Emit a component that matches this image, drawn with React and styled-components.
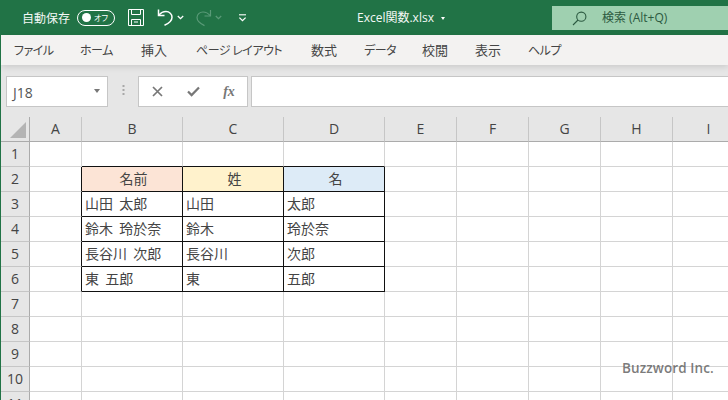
import React from "react";
import styled, { createGlobalStyle } from "styled-components";

const CJK = `"Noto Sans CJK JP", "Noto Sans", sans-serif`;
const UI = `"Open Sans", "Noto Sans CJK JP", sans-serif`;

const Global = createGlobalStyle`
  html, body { margin: 0; padding: 0; background: #fff; }
  body { width: 728px; height: 400px; overflow: hidden; font-family: ${UI}; }
  * { box-sizing: border-box; }
`;

const Page = styled.div`
  position: relative;
  width: 728px;
  height: 400px;
  overflow: hidden;
  border-left: 1px solid #217346;
  display: flex;
  flex-direction: column;
`;

const TitleBar = styled.header`
  height: 35px;
  margin-left: -1px;
  background: #217346;
  color: #fff;
  display: grid;
  grid-template-columns: 552px 176px;
  flex: none;
`;
const QuickAccess = styled.div`
  display: flex;
  align-items: center;
  padding-left: 22px;
  position: relative;
`;
const AutoSave = styled.span`
  font: 12px/16px ${CJK};
  width: 55px;
  flex: none;
  color: #f4f8f6;
`;
const Toggle = styled.span`
  width: 38px;
  height: 16px;
  flex: none;
  border: 1.2px solid #fff;
  border-radius: 8px;
  display: flex;
  align-items: center;
  padding: 0 0 0 4px;
  gap: 3px;
  margin-right: 13px;
  font: 8px/12px ${CJK};
  font-feature-settings: "palt";
  white-space: nowrap;
`;
const Knob = styled.i`
  width: 9px;
  height: 9px;
  flex: none;
  border-radius: 50%;
  background: #fff;
`;
const IconSlot = styled.span`
  display: inline-flex;
  width: ${(p) => p.$w}px;
  flex: none;
  justify-content: flex-start;
  align-items: center;
  height: 35px;
`;
const FileName = styled.div`
  position: absolute;
  left: 357px;
  top: 9px;
  font: 12px/17px ${UI};
  color: #f4f8f6;
  display: flex;
  align-items: center;
  white-space: nowrap;
`;
const FileCaret = styled.i`
  width: 0;
  height: 0;
  margin-left: 7px;
  margin-top: 2px;
  border: 2.5px solid transparent;
  border-top: 3px solid #fff;
  border-bottom: none;
`;
const SearchBox = styled.div`
  height: 24px;
  margin-top: 6px;
  background: #9fd0b0;
  color: #2c5a41;
  display: flex;
  align-items: center;
  padding-left: 20px;
  font: 12px/16px ${UI};
  gap: 15px;
`;

const Menu = styled.nav`
  height: 30px;
  flex: none;
  background: #f3f2f1;
  display: flex;
  align-items: center;
  padding-left: 13px;
  font: 13px/16px ${CJK};
  font-feature-settings: "palt";
  color: #444;
  position: relative;
  z-index: 2;
  box-shadow: 0 2px 6px rgba(0, 0, 0, 0.12);
`;
const MenuItem = styled.span`
  width: ${(p) => p.$w}px;
  flex: none;
  white-space: nowrap;
  font-size: ${(p) => (p.$kana ? "12px" : "13px")};
  letter-spacing: ${(p) => (p.$kana ? "-0.5px" : "0")};
`;

const FormulaBar = styled.div`
  height: 52px;
  flex: none;
  background: #e6e6e6;
  display: flex;
  padding: 11px 0 0 5px;
  align-items: flex-start;
`;
const NameBox = styled.div`
  width: 102px;
  height: 31px;
  background: #fff;
  border: 1px solid #c6c6c6;
  display: flex;
  align-items: center;
  justify-content: space-between;
  padding: 2px 7px 0 6px;
  font: 14px/16px ${UI};
  color: #555;
`;
const NameCaret = styled.i`
  width: 0;
  height: 0;
  margin-top: -3px;
  border: 3.5px solid transparent;
  border-top: 4px solid #777;
  border-bottom: none;
`;
const Grip = styled.span`
  width: 30px;
  flex: none;
  display: flex;
  justify-content: center;
  padding-top: 9px;
`;
const FxButtons = styled.div`
  width: 110px;
  height: 31px;
  flex: none;
  background: #fff;
  border: 1px solid #c6c6c6;
  display: grid;
  grid-template-columns: repeat(3, 36px);
  align-items: center;
  justify-items: center;
  margin-right: 3px;
`;
const FxLabel = styled.span`
  font: italic bold 14px/14px "Liberation Serif", serif;
  color: #777;
`;
const FormulaInput = styled.div`
  flex: 1;
  height: 31px;
  background: #fff;
  border: 1px solid #c6c6c6;
  border-right: none;
`;

const Sheet = styled.div`
  flex: 1;
  display: grid;
  grid-template-columns: 29px 52px 101px 101px 101px 72px 72px 72px 72px 72px;
  grid-template-rows: repeat(12, 25px);
  background: #fff;
  font-family: ${CJK};
`;
const Corner = styled.div`
  background: #e6e6e6;
  border-right: 1px solid #ababab;
  border-bottom: 1px solid #ababab;
  position: relative;
  &::after {
    content: "";
    position: absolute;
    right: 3px;
    bottom: 3px;
    border-style: solid;
    border-width: 0 0 16px 16px;
    border-color: transparent transparent #b4b4b4 transparent;
  }
`;
const ColHead = styled.div`
  background: #e6e6e6;
  border-right: 1px solid #c6c6c6;
  border-bottom: 1px solid #ababab;
  display: flex;
  align-items: center;
  justify-content: center;
  font: 14px/16px ${UI};
  color: #444;
`;
const RowHead = styled.div`
  background: #e6e6e6;
  border-right: 1px solid #ababab;
  border-bottom: 1px solid #c6c6c6;
  display: flex;
  align-items: center;
  justify-content: center;
  font: 14px/16px ${UI};
  color: #444;
`;
const Cell = styled.div`
  background: ${(p) => p.$fill || "#fff"};
  border-right: 1px solid ${(p) => (p.$darkRight ? "#111" : "#d4d4d4")};
  border-bottom: 1px solid ${(p) => (p.$darkBottom ? "#111" : "#d4d4d4")};
  font: 14px/22px ${CJK};
  word-spacing: 3px;
  color: #444;
  padding-left: 3px;
  white-space: nowrap;
  overflow: hidden;
  text-align: ${(p) => (p.$center ? "center" : "left")};
`;
const Watermark = styled.div`
  position: absolute;
  left: 621px;
  top: 359px;
  font: 600 13.5px/18px "Open Sans", sans-serif;
  color: rgba(100, 100, 100, 0.85);
  letter-spacing: 0.1px;
  white-space: nowrap;
`;

const cols = ["A", "B", "C", "D", "E", "F", "G", "H", "I"];
const fills = { 1: "#fce4d6", 2: "#fff2cc", 3: "#ddebf7" };
const table = [
  ["名前", "姓", "名"],
  ["山田 太郎", "山田", "太郎"],
  ["鈴木 玲於奈", "鈴木", "玲於奈"],
  ["長谷川 次郎", "長谷川", "次郎"],
  ["東 五郎", "東", "五郎"],
];
const menu = [
  ["ファイル", 66, true],
  ["ホーム", 61, true],
  ["挿入", 55, false],
  ["ページ レイアウト", 115, true],
  ["数式", 53, false],
  ["データ", 58, true],
  ["校閲", 53, false],
  ["表示", 53, false],
  ["ヘルプ", 60, true],
];

function cellProps(r, c) {
  // r: row number 1-based; c: column index 0=A
  const inCols = c >= 1 && c <= 3;
  const inRows = r >= 2 && r <= 6;
  return {
    $darkRight: inRows && c >= 0 && c <= 3,
    $darkBottom: inCols && r >= 1 && r <= 6,
    $fill: r === 2 ? fills[c] : undefined,
    $center: r === 2,
    children: inCols && inRows ? table[r - 2][c - 1] : null,
  };
}

const SaveIcon = () => (
  <svg width="16" height="17" viewBox="0 0 16 17" fill="none" stroke="#fff" strokeWidth="1">
    <path d="M.5.5h15v16H.5z" />
    <path d="M3.5.5v5h9v-5M3.5 16.5v-6h9v6M6 13h4" />
  </svg>
);
const Undo = ({ color = "#fff" }) => (
  <svg width="17" height="19" viewBox="0 0 17 19" fill="none" stroke={color} strokeWidth="1.5">
    <path d="M1.5 1.5v6h6" />
    <path d="M1.8 7.2C4 4.6 6.4 3.6 9 3.6c3.4 0 6 2.4 6 5.6 0 3.6-3 6-7.5 8" />
  </svg>
);
const Redo = () => (
  <svg width="17" height="19" viewBox="0 0 17 19" fill="none" stroke="#5a9a78" strokeWidth="1.2">
    <path d="M15.5 2v6h-6" />
    <path d="M15.2 7.6C13 5 10.6 4 8 4 4.6 4 2 6.4 2 9.6c0 3.6 3 6 7.5 8" />
  </svg>
);
const Chevron = ({ color = "#fff" }) => (
  <svg width="7" height="5" viewBox="0 0 7 5" fill="none" stroke={color} strokeWidth="1.3">
    <path d="M.8 1l2.7 2.6L6.2 1" />
  </svg>
);
const Customize = () => (
  <svg width="9" height="8" viewBox="0 0 9 8" fill="none" stroke="#fff">
    <path d="M1 .8h7" strokeWidth="1.1" />
    <path d="M1.4 3.6l3.1 3 3.1-3" strokeWidth="1.3" />
  </svg>
);
const SearchIcon = () => (
  <svg width="15" height="15" viewBox="0 0 15 15" fill="none" stroke="#2c5a41" strokeWidth="1.1">
    <circle cx="9.3" cy="5.7" r="4.6" />
    <path d="M6 9L1 14" />
  </svg>
);
const GripDots = () => (
  <svg width="3" height="11" viewBox="0 0 3 11" fill="#a8a8a8">
    <rect x="0.5" y="0" width="2" height="2" />
    <rect x="0.5" y="4" width="2" height="2" />
    <rect x="0.5" y="8" width="2" height="2" />
  </svg>
);
const Cross = () => (
  <svg width="11" height="11" viewBox="0 0 11 11" stroke="#777" strokeWidth="1.7">
    <path d="M1 1l9 9M10 1l-9 9" />
  </svg>
);
const Check = () => (
  <svg width="13" height="11" viewBox="0 0 13 11" fill="none" stroke="#777" strokeWidth="2.2">
    <path d="M1 5.5l3.6 3.6L12 1.5" />
  </svg>
);

export default function App() {
  const rows = Array.from({ length: 11 }, (_, i) => i + 1);
  return (
    <Page>
      <Global />
      <TitleBar>
        <QuickAccess>
          <AutoSave>自動保存</AutoSave>
          <Toggle>
            <Knob />
            オフ
          </Toggle>
          <IconSlot $w={29}><SaveIcon /></IconSlot>
          <IconSlot $w={20}><Undo /></IconSlot>
          <IconSlot $w={18}><Chevron /></IconSlot>
          <IconSlot $w={20}><Redo /></IconSlot>
          <IconSlot $w={23}><Chevron color="#5a9a78" /></IconSlot>
          <IconSlot $w={12}><Customize /></IconSlot>
          <FileName>
            Excel関数.xlsx
            <FileCaret />
          </FileName>
        </QuickAccess>
        <SearchBox>
          <SearchIcon />
          <span>検索 (Alt+Q)</span>
        </SearchBox>
      </TitleBar>
      <Menu>
        {menu.map(([t, w, kana]) => (
          <MenuItem key={t} $w={w} $kana={kana}>{t}</MenuItem>
        ))}
      </Menu>
      <FormulaBar>
        <NameBox>
          J18
          <NameCaret />
        </NameBox>
        <Grip><GripDots /></Grip>
        <FxButtons>
          <Cross />
          <Check />
          <FxLabel>fx</FxLabel>
        </FxButtons>
        <FormulaInput />
      </FormulaBar>
      <Sheet>
        <Corner />
        {cols.map((c) => (
          <ColHead key={c}>{c}</ColHead>
        ))}
        {rows.map((r) => (
          <React.Fragment key={r}>
            <RowHead>{r}</RowHead>
            {cols.map((_, c) => (
              <Cell key={c} {...cellProps(r, c)} />
            ))}
          </React.Fragment>
        ))}
      </Sheet>
      <Watermark>Buzzword Inc.</Watermark>
    </Page>
  );
}
